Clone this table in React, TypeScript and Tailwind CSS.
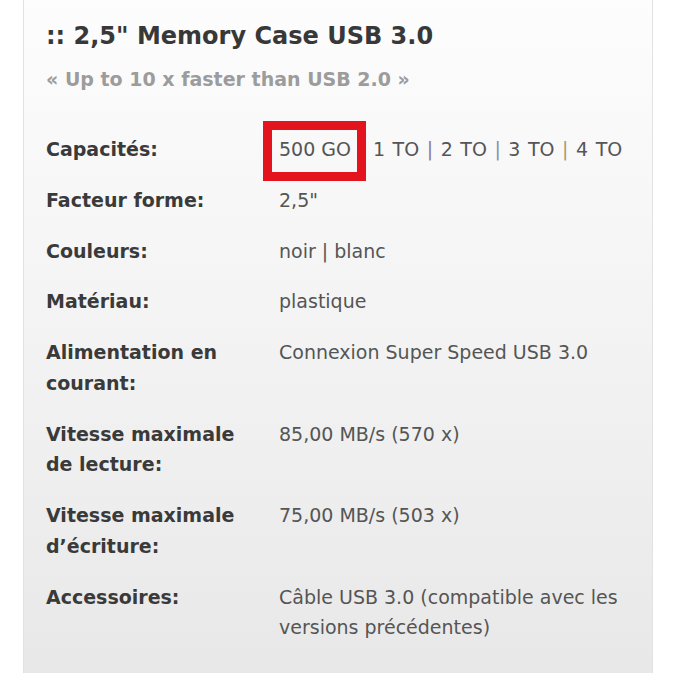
const specs: { label: string[]; value: React.ReactNode }[] = [
  { label: ['Capacités:'], value: null },
  { label: ['Facteur forme:'], value: ['2,5"'] },
  { label: ['Couleurs:'], value: ['noir | blanc'] },
  { label: ['Matériau:'], value: ['plastique'] },
  { label: ['Alimentation en', 'courant:'], value: ['Connexion Super Speed USB 3.0'] },
  { label: ['Vitesse maximale', 'de lecture:'], value: ['85,00 MB/s (570 x)'] },
  { label: ['Vitesse maximale', 'd’écriture:'], value: ['75,00 MB/s (503 x)'] },
  { label: ['Accessoires:'], value: ['Câble USB 3.0 (compatible avec les', 'versions précédentes)'] },
]

function Capacities() {
  return (
    <div className="flex items-center">
      <span className="relative">
        500 GO
        <span className="absolute -left-[16px] -right-[15px] -top-[13px] -bottom-[16px] border-[9px] border-[#e3141e]" />
      </span>
      <span className="ml-[22px] [word-spacing:1.5px]">
        1 TO <span className="text-[#8a7a9a]">|</span> 2 TO <span className="text-[#7f95ad]">|</span> 3 TO{' '}
        <span className="text-[#a89a70]">|</span> 4 TO
      </span>
    </div>
  )
}

export default function App() {
  return (
    <div className="h-[680px] w-[680px] overflow-hidden bg-white font-['DejaVu_Sans',sans-serif]">
      <div className="ml-[23px] h-[673px] w-[630px] border-x border-[#e2e2e2] bg-gradient-to-b from-[#fdfdfd] via-[#f3f3f3] to-[#e8e8e8] pl-[22px] pt-[20px]">
        <h1 className="text-[24px] font-bold leading-[32px] text-[#383838]">:: 2,5" Memory Case USB 3.0</h1>
        <p className="mt-[12px] text-[19px] font-bold leading-[31px] text-[#9c9c9c]">
          « Up to 10 x faster than USB 2.0 »
        </p>
        <div className="mt-[39px] grid grid-cols-[233px_1fr] gap-y-[20px] text-[19px] leading-[30.75px]">
          {specs.map((s, i) => (
            <div key={i} className="contents">
              <div className="font-bold text-[#3a3a3a]">
                {s.label.map((l) => (
                  <div key={l}>{l}</div>
                ))}
              </div>
              <div className="text-[#555555]">
                {i === 0 ? (
                  <Capacities />
                ) : (
                  (s.value as string[]).map((v) => <div key={v}>{v}</div>)
                )}
              </div>
            </div>
          ))}
        </div>
      </div>
    </div>
  )
}
